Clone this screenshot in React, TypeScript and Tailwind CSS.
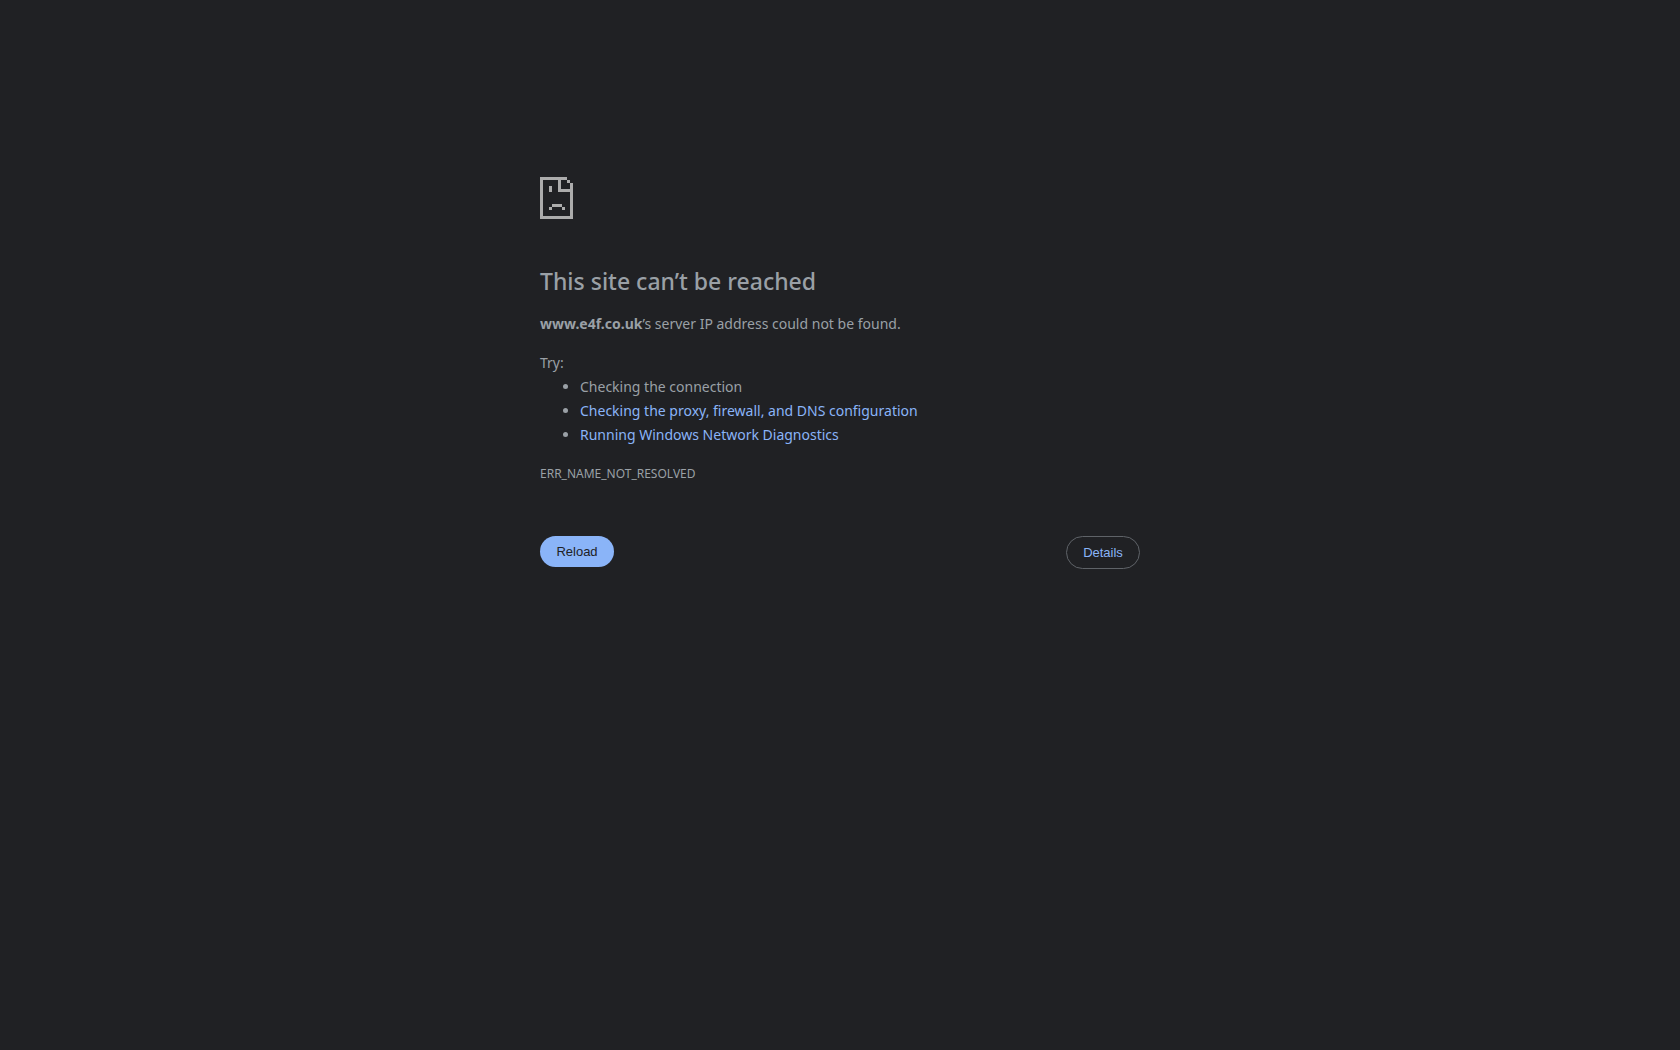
const suggestions = [
  { label: 'Checking the connection', href: '' },
  { label: 'Checking the proxy, firewall, and DNS configuration', href: '#proxy' },
  { label: 'Running Windows Network Diagnostics', href: '#diagnostics' },
];

function SadPageIcon() {
  return (
    <svg
      width="33"
      height="42"
      viewBox="0 0 33 42"
      fill="#acacac"
      shapeRendering="crispEdges"
      aria-hidden="true"
    >
      {/* page outline */}
      <path d="M0 0h27v3H3v36h27V15H18V3h3v9h9V6h3v36H0z" />
      <path d="M27 3h3v3h-3z" />
      {/* face */}
      <path d="M9 9h3v6H9zM12 27h10v3H12zM9 30h3v3H9zM22 30h3v3h-3z" />
    </svg>
  );
}

export default function App() {
  return (
    <div className="min-h-screen bg-[#202124] px-6 pt-[177px] font-['Noto_Sans',sans-serif] text-[14px] leading-6 text-[#9aa0a6]">
      <main className="mx-auto max-w-[600px]">
        <SadPageIcon />

        <h1 className="mt-[47px] mb-4 text-[23px] leading-[30px] font-medium">
          This site can’t be reached
        </h1>
        <p>
          <strong className="font-bold">www.e4f.co.uk</strong>’s server IP address could not be found.
        </p>

        <div className="mt-[15px]">
          <p>Try:</p>
          <ul className="list-disc pl-10">
            {suggestions.map((item) => (
              <li key={item.label}>
                {item.href ? (
                  <a href={item.href} className="text-[#8ab4f8]">
                    {item.label}
                  </a>
                ) : (
                  item.label
                )}
              </li>
            ))}
          </ul>
        </div>

        <p className="mt-[15px] text-[12px]">ERR_NAME_NOT_RESOLVED</p>

        <div className="mt-[50px] flex items-start justify-between font-['Liberation_Sans',Arial,sans-serif] text-[13px] leading-[15px]">
          <button type="button" className="min-w-[74px] rounded-full bg-[#8ab4f8] px-4 py-2 text-[#202124]">
            Reload
          </button>
          <button type="button" className="min-w-[74px] rounded-full border border-[#5f6368] px-4 py-2 text-[#8ab4f8]">
            Details
          </button>
        </div>
      </main>
    </div>
  );
}
